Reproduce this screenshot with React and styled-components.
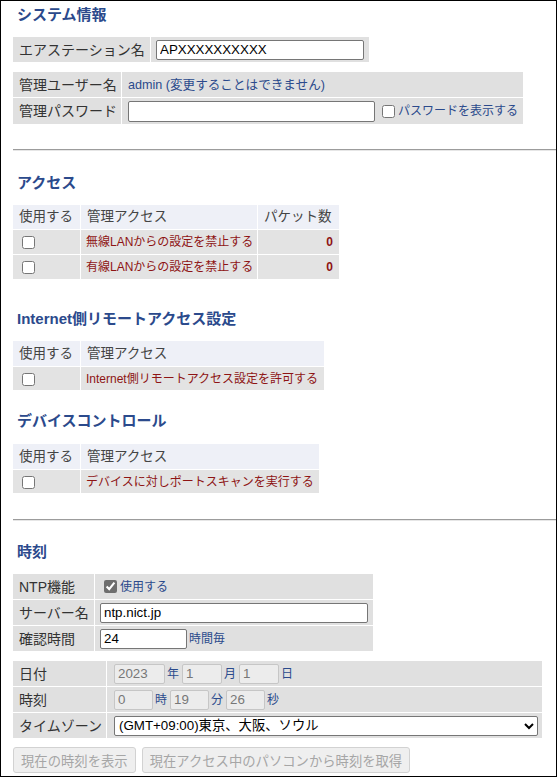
import styled, { createGlobalStyle } from "styled-components"

const GlobalStyle = createGlobalStyle`
  html, body {
    margin: 0;
    padding: 0;
    background: #fff;
  }
  body {
    font-family: "Liberation Sans", "Noto Sans CJK JP", sans-serif;
  }
`

const Frame = styled.div`
  box-sizing: border-box;
  width: 557px;
  height: 777px;
  border: 1px solid #000;
  padding: 3px 0 0 11px;
  overflow: hidden;
`

const Heading = styled.h2`
  margin: ${p => p.$top}px 0 0;
  padding-left: 5px;
  height: 20px;
  line-height: 20px;
  font-size: 15px;
  font-weight: bold;
  color: #2b4a8c;
`

const Rule = styled.hr`
  margin: ${p => p.$top}px 0 0 1px;
  height: 0;
  border: 0;
  border-top: 1px solid #9c9c9c;
  border-bottom: 1px solid #e6e6e6;
`

const Grid = styled.table`
  border-collapse: separate;
  border-spacing: 1px;
  table-layout: fixed;
  width: ${p => p.$width}px;
  margin-top: ${p => p.$top}px;
`

const Col = styled.col`
  width: ${p => p.$w}px;
`

const Row = styled.tr`
  height: ${p => p.$h || 24}px;
`

const Head = styled.th`
  background: #eef0f7;
  color: #444;
  font-weight: normal;
  font-size: 13.5px;
  text-align: left;
  padding: 0 6px;
  line-height: 16px;
  white-space: nowrap;
`

const Label = styled.td`
  background: #e0e0e0;
  color: #333;
  font-size: 14px;
  padding: 0 6px;
  line-height: 16px;
  white-space: nowrap;
`

const Value = styled.td`
  background: #e0e0e0;
  color: #2b4a8c;
  font-size: ${p => p.$size || 12}px;
  padding: 0 4px 0 ${p => p.$pad ?? 5}px;
  line-height: 16px;
  white-space: nowrap;
`

const Cell = styled.td`
  background: #e3e3e3;
  color: #8e1414;
  font-size: 12px;
  font-weight: ${p => (p.$num ? "bold" : "normal")};
  text-align: ${p => (p.$num ? "right" : "left")};
  padding: 0 6px 0 ${p => (p.$num ? 6 : 5)}px;
  line-height: 16px;
  white-space: nowrap;
`

const Inline = styled.div`
  display: flex;
  align-items: center;
`

const Check = styled.input.attrs({ type: "checkbox" })`
  width: 13px;
  height: 13px;
  margin: 0 ${p => p.$after ?? 3}px 0 ${p => p.$before ?? 4}px;
  vertical-align: middle;
  accent-color: #6e6e6e;
`

const Field = styled.input`
  box-sizing: border-box;
  width: ${p => p.$w}px;
  height: ${p => p.$h || 20}px;
  margin: 0;
  padding: 1px 3px;
  border: 1px solid #767676;
  border-radius: 2px;
  background: #fff;
  color: #000;
  font-family: "Liberation Sans", "Noto Sans CJK JP", sans-serif;
  font-size: 13.33px;

  &:disabled {
    background: #ececec;
    border-color: #c6c6c6;
    color: #777;
  }
`

const Unit = styled.span`
  margin: 0 3px 0 2px;
  font-size: 12px;
  color: #2b4a8c;
`

const Zone = styled.select`
  box-sizing: border-box;
  width: 424px;
  height: 20px;
  margin: 0;
  border: 1px solid #767676;
  border-radius: 2px;
  background: #fff;
  color: #000;
  font-family: "Liberation Sans", "Noto Sans CJK JP", sans-serif;
  font-size: 13.33px;
`

const Buttons = styled.div`
  display: flex;
  gap: 6px;
  margin: 8px 0 0 1px;
`

const Button = styled.button`
  height: 26px;
  padding: 0 7px;
  border: 1px solid #d2d2d2;
  border-radius: 3px;
  background: #efefef;
  color: #a6a6a6;
  font-family: "Liberation Sans", "Noto Sans CJK JP", sans-serif;
  font-size: 13.33px;
`

const accessRows = [
  { text: "無線LANからの設定を禁止する", count: 0 },
  { text: "有線LANからの設定を禁止する", count: 0 },
]

function AccessTable({ top, width, textWidth, text, headH, rowH }) {
  return (
    <Grid $top={top} $width={width}>
      <colgroup>
        <Col $w={67} />
        <Col $w={textWidth} />
      </colgroup>
      <tbody>
        <Row $h={headH}>
          <Head>使用する</Head>
          <Head>管理アクセス</Head>
        </Row>
        <Row $h={rowH}>
          <Cell><Check $before={4} /></Cell>
          <Cell>{text}</Cell>
        </Row>
      </tbody>
    </Grid>
  )
}

export default function App() {
  return (
    <>
      <GlobalStyle />
      <Frame>
        <Heading $top={1}>システム情報</Heading>

        <Grid $top={11} $width={358}>
          <colgroup>
            <Col $w={137} />
            <Col $w={218} />
          </colgroup>
          <tbody>
            <Row $h={25}>
              <Label>エアステーション名</Label>
              <Value><Field $w={208} defaultValue="APXXXXXXXXXX" /></Value>
            </Row>
          </tbody>
        </Grid>

        <Grid $top={8} $width={512}>
          <colgroup>
            <Col $w={108} />
            <Col $w={401} />
          </colgroup>
          <tbody>
            <Row $h={25}>
              <Label>管理ユーザー名</Label>
              <Value $pad={6} $size={12.6}>admin (変更することはできません)</Value>
            </Row>
            <Row $h={26}>
              <Label>管理パスワード</Label>
              <Value $pad={6}>
                <Inline>
                  <Field type="password" $w={247} $h={21} />
                  <Check $before={7} $after={3} />
                  パスワードを表示する
                </Inline>
              </Value>
            </Row>
          </tbody>
        </Grid>

        <Rule $top={24} />

        <Heading $top={22}>アクセス</Heading>
        <Grid $top={11} $width={328}>
          <colgroup>
            <Col $w={67} />
            <Col $w={176} />
            <Col $w={81} />
          </colgroup>
          <tbody>
            <Row $h={24}>
              <Head>使用する</Head>
              <Head>管理アクセス</Head>
              <Head>パケット数</Head>
            </Row>
            {accessRows.map(r => (
              <Row $h={24} key={r.text}>
                <Cell><Check $before={4} /></Cell>
                <Cell>{r.text}</Cell>
                <Cell $num>{r.count}</Cell>
              </Row>
            ))}
          </tbody>
        </Grid>

        <Heading $top={29}>Internet側リモートアクセス設定</Heading>
        <AccessTable
          top={11}
          width={313}
          textWidth={243}
          headH={25}
          rowH={23}
          text="Internet側リモートアクセス設定を許可する"
        />

        <Heading $top={20}>デバイスコントロール</Heading>
        <AccessTable
          top={12}
          width={308}
          textWidth={238}
          headH={25}
          rowH={23}
          text="デバイスに対しポートスキャンを実行する"
        />

        <Rule $top={25} />

        <Heading $top={21}>時刻</Heading>
        <Grid $top={11} $width={362}>
          <colgroup>
            <Col $w={81} />
            <Col $w={278} />
          </colgroup>
          <tbody>
            <Row $h={25}>
              <Label>NTP機能</Label>
              <Value>
                <Inline>
                  <Check defaultChecked $before={4} $after={3} />
                  使用する
                </Inline>
              </Value>
            </Row>
            <Row $h={25}>
              <Label>サーバー名</Label>
              <Value><Field $w={268} defaultValue="ntp.nict.jp" /></Value>
            </Row>
            <Row $h={25}>
              <Label>確認時間</Label>
              <Value>
                <Inline>
                  <Field $w={87} defaultValue="24" />
                  <Unit>時間毎</Unit>
                </Inline>
              </Value>
            </Row>
          </tbody>
        </Grid>

        <Grid $top={8} $width={531}>
          <colgroup>
            <Col $w={93} />
            <Col $w={435} />
          </colgroup>
          <tbody>
            <Row $h={25}>
              <Label>日付</Label>
              <Value $pad={7}>
                <Inline>
                  <Field $w={51} disabled defaultValue="2023" />
                  <Unit>年</Unit>
                  <Field $w={40} disabled defaultValue="1" />
                  <Unit>月</Unit>
                  <Field $w={40} disabled defaultValue="1" />
                  <Unit>日</Unit>
                </Inline>
              </Value>
            </Row>
            <Row $h={25}>
              <Label>時刻</Label>
              <Value $pad={7}>
                <Inline>
                  <Field $w={39} disabled defaultValue="0" />
                  <Unit>時</Unit>
                  <Field $w={39} disabled defaultValue="19" />
                  <Unit>分</Unit>
                  <Field $w={39} disabled defaultValue="26" />
                  <Unit>秒</Unit>
                </Inline>
              </Value>
            </Row>
            <Row $h={25}>
              <Label>タイムゾーン</Label>
              <Value $pad={7}>
                <Zone defaultValue="jst">
                  <option value="jst">(GMT+09:00)東京、大阪、ソウル</option>
                </Zone>
              </Value>
            </Row>
          </tbody>
        </Grid>

        <Buttons>
          <Button disabled>現在の時刻を表示</Button>
          <Button disabled>現在アクセス中のパソコンから時刻を取得</Button>
        </Buttons>
      </Frame>
    </>
  )
}
